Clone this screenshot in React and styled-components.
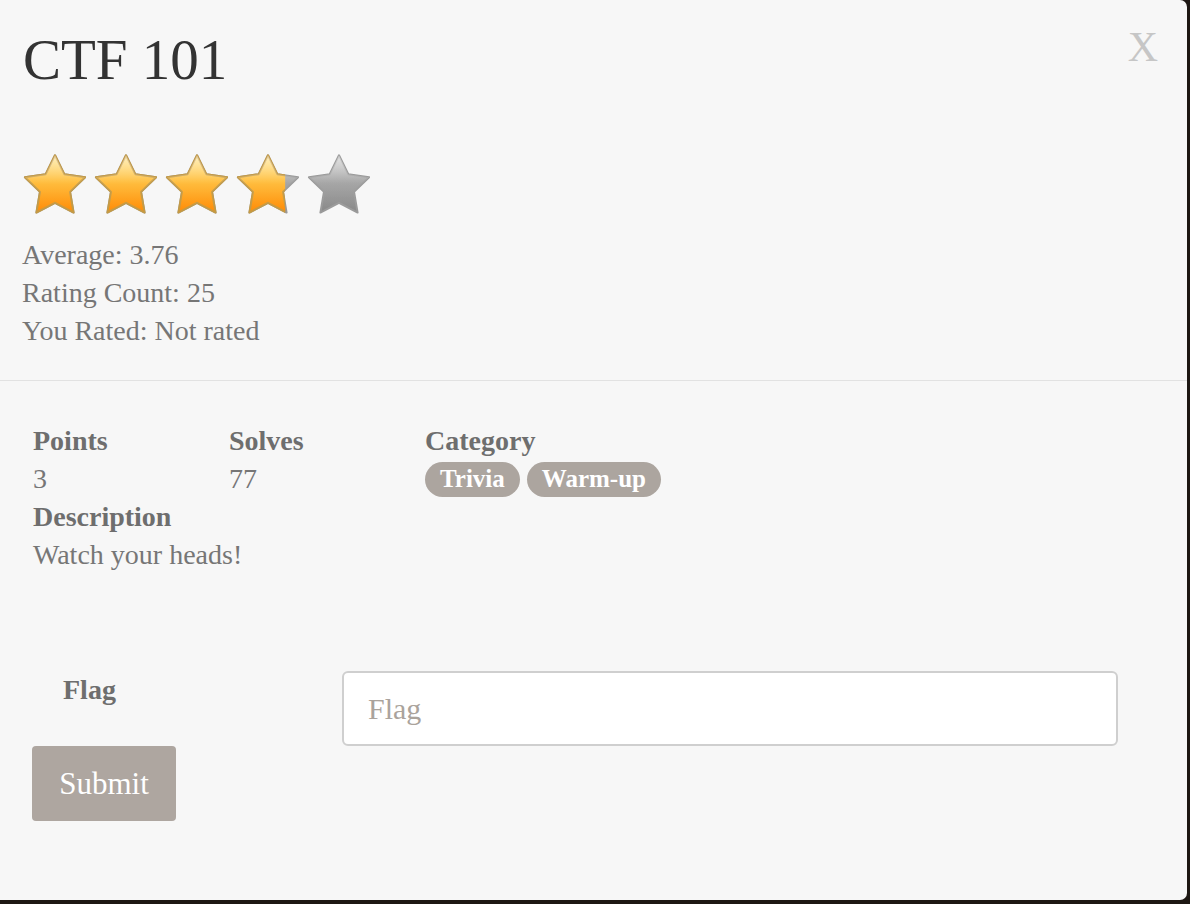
import styled, { createGlobalStyle } from "styled-components";

const GlobalStyle = createGlobalStyle`
  html, body {
    margin: 0;
    padding: 0;
    background: #1d1713;
  }
  body {
    font-family: "Liberation Serif", "Times New Roman", serif;
  }
`;

const Modal = styled.div`
  position: relative;
  width: 1187px;
  height: 900px;
  background: #f7f7f7;
  border-top-right-radius: 7px;
  border-bottom-right-radius: 7px;
  box-sizing: border-box;
  overflow: hidden;
`;

const CloseButton = styled.button`
  position: absolute;
  top: 26px;
  right: 29px;
  border: none;
  background: none;
  padding: 0;
  font-family: "Liberation Serif", serif;
  font-size: 42px;
  line-height: 1;
  color: #c6c6c6;
  cursor: pointer;
`;

const Header = styled.div`
  padding: 26px 22px 30px;
  border-bottom: 1px solid #e2e2e2;
`;

const Title = styled.h1`
  margin: 0 0 0 1px;
  font-size: 57px;
  line-height: 68px;
  font-weight: normal;
  color: #333;
`;

const StarRow = styled.div`
  display: flex;
  gap: 5px;
  margin-top: 58px;
`;

const RatingInfo = styled.div`
  margin-top: 18px;
`;

const InfoLine = styled.div`
  font-size: 28px;
  line-height: 38px;
  color: #767676;
`;

const Body = styled.div`
  padding: 41px 33px 0;
`;

const StatsGrid = styled.div`
  display: grid;
  grid-template-columns: 196px 196px 1fr;
`;

const Label = styled.div`
  font-size: 28px;
  line-height: 38px;
  font-weight: bold;
  color: #6e6e6e;
`;

const Value = styled.div`
  font-size: 28px;
  line-height: 38px;
  color: #767676;
`;

const Tags = styled.div`
  display: flex;
  gap: 7px;
  height: 38px;
  align-items: center;
`;

const Tag = styled.span`
  display: inline-flex;
  align-items: center;
  height: 35px;
  padding: 0 15px;
  border-radius: 18px;
  background: #aca59f;
  color: #fff;
  font-weight: bold;
  font-size: 25px;
`;

const FlagForm = styled.form`
  padding: 97px 0 0 32px;
`;

const FlagRow = styled.div`
  display: flex;
  align-items: flex-start;
`;

const FlagLabel = styled.label`
  width: 310px;
  padding: 0 0 0 31px;
  box-sizing: border-box;
  font-size: 28px;
  line-height: 38px;
  font-weight: bold;
  color: #6e6e6e;
`;

const FlagInput = styled.input`
  width: 776px;
  height: 75px;
  box-sizing: border-box;
  border: 2px solid #cfcfcf;
  border-radius: 6px;
  background: #fff;
  padding: 0 24px;
  font-family: "Liberation Serif", serif;
  font-size: 30px;
  color: #555;
  outline: none;
  &::placeholder {
    color: #aaa39c;
  }
`;

const SubmitButton = styled.button`
  display: block;
  width: 144px;
  height: 75px;
  border: none;
  border-radius: 4px;
  background: #aea6a0;
  color: #fff;
  font-family: "Liberation Serif", serif;
  font-size: 31px;
  cursor: pointer;
`;

const STAR =
  "M50 5 L64.1 33.6 L95.6 38.2 L72.8 60.4 L78.2 91.8 L50 77 L21.8 91.8 L27.2 60.4 L4.4 38.2 L35.9 33.6 Z";

function Star({ id, fill }) {
  const w = Math.max(0, Math.min(1, fill)) * 100;
  return (
    <svg width="66" height="66" viewBox="0 0 100 100">
      <defs>
        <linearGradient id={`gold-${id}`} x1="0" y1="0" x2="0" y2="1">
          <stop offset="0" stopColor="#ffe07a" />
          <stop offset="0.45" stopColor="#ffbb33" />
          <stop offset="1" stopColor="#ff8a05" />
        </linearGradient>
        <linearGradient id={`grey-${id}`} x1="0" y1="0" x2="0" y2="1">
          <stop offset="0" stopColor="#c8c8c8" />
          <stop offset="0.45" stopColor="#a2a2a2" />
          <stop offset="1" stopColor="#888" />
        </linearGradient>
        <linearGradient id={`gloss-${id}`} x1="0" y1="0" x2="0" y2="1">
          <stop offset="0" stopColor="#fff" stopOpacity="0.5" />
          <stop offset="0.5" stopColor="#fff" stopOpacity="0.06" />
          <stop offset="1" stopColor="#fff" stopOpacity="0" />
        </linearGradient>
        <clipPath id={`clip-${id}`}>
          <rect x="0" y="0" width={w} height="100" />
        </clipPath>
      </defs>
      <path
        d={STAR}
        fill={`url(#grey-${id})`}
        stroke="#9a9a9a"
        strokeWidth="3"
        strokeLinejoin="round"
      />
      <g clipPath={`url(#clip-${id})`}>
        <path
          d={STAR}
          fill={`url(#gold-${id})`}
          stroke="#c49a45"
          strokeWidth="3"
          strokeLinejoin="round"
        />
      </g>
      <path d={STAR} fill={`url(#gloss-${id})`} />
    </svg>
  );
}

export default function App() {
  const average = 3.76;
  return (
    <>
      <GlobalStyle />
      <Modal>
        <CloseButton>X</CloseButton>
        <Header>
          <Title>CTF 101</Title>
          <StarRow>
            {[0, 1, 2, 3, 4].map((i) => (
              <Star key={i} id={i} fill={average - i} />
            ))}
          </StarRow>
          <RatingInfo>
            <InfoLine>Average: 3.76</InfoLine>
            <InfoLine>Rating Count: 25</InfoLine>
            <InfoLine>You Rated: Not rated</InfoLine>
          </RatingInfo>
        </Header>
        <Body>
          <StatsGrid>
            <Label>Points</Label>
            <Label>Solves</Label>
            <Label>Category</Label>
            <Value>3</Value>
            <Value>77</Value>
            <Tags>
              <Tag>Trivia</Tag>
              <Tag>Warm-up</Tag>
            </Tags>
          </StatsGrid>
          <Label>Description</Label>
          <Value>Watch your heads!</Value>
        </Body>
        <FlagForm onSubmit={(e) => e.preventDefault()}>
          <FlagRow>
            <FlagLabel htmlFor="flag">Flag</FlagLabel>
            <FlagInput id="flag" placeholder="Flag" />
          </FlagRow>
          <SubmitButton type="submit">Submit</SubmitButton>
        </FlagForm>
      </Modal>
    </>
  );
}
